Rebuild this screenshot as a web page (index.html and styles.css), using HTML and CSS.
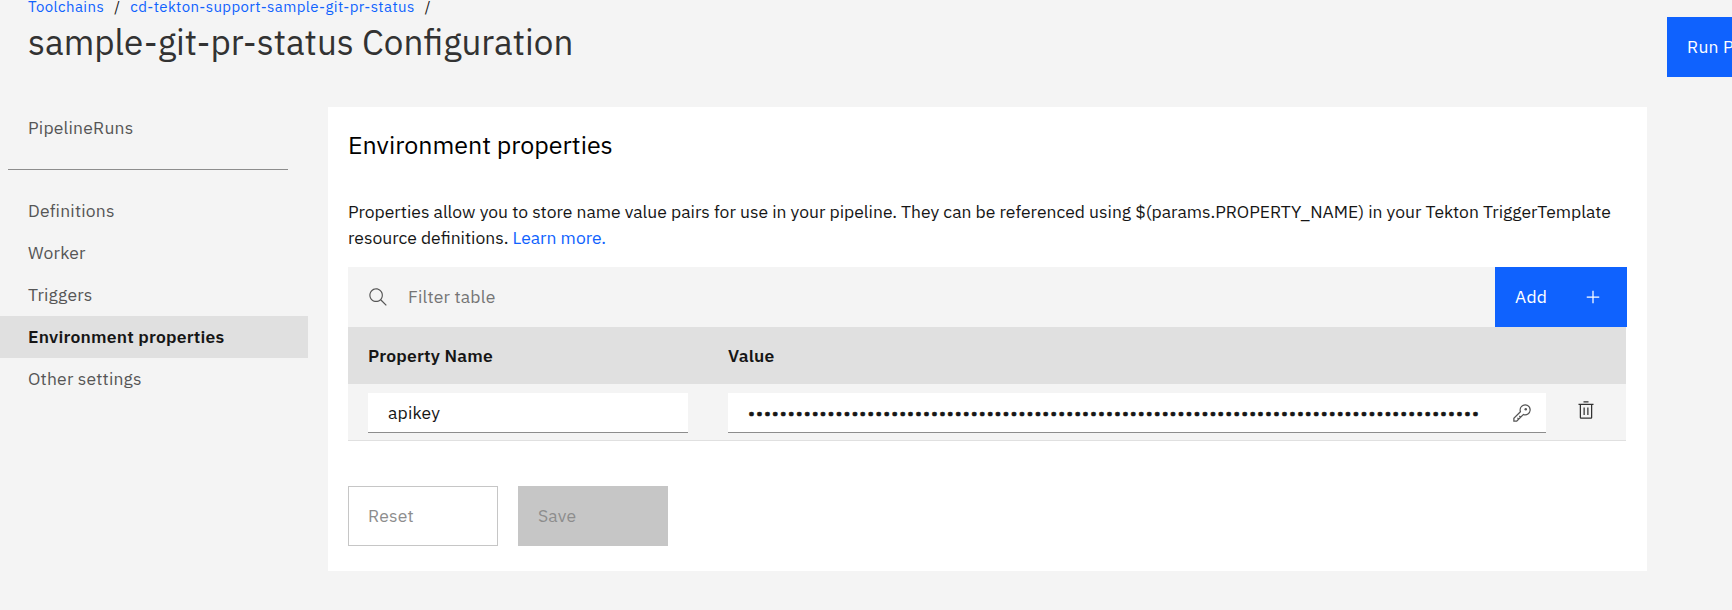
FILE: index.html
```html
<!DOCTYPE html>
<html lang="en">
<head>
<meta charset="utf-8">
<title>sample-git-pr-status Configuration</title>
<link rel="stylesheet" href="styles.css">
</head>
<body>
<header class="header">
  <div class="heading">
    <nav class="crumbs"><a class="crumb-root" href="#">Toolchains</a><span>/</span><a class="crumb-chain" href="#">cd-tekton-support-sample-git-pr-status</a><span>/</span></nav>
    <h1 class="title">sample-git-pr-status Configuration</h1>
  </div>
  <button class="btn run">Run Pipeline</button>
</header>
<div class="body">
  <nav class="side">
    <a class="item runs" href="#">PipelineRuns</a>
    <hr class="rule">
    <a class="item defs" href="#">Definitions</a>
    <a class="item worker" href="#">Worker</a>
    <a class="item triggers" href="#">Triggers</a>
    <a class="item selected" href="#">Environment properties</a>
    <a class="item other" href="#">Other settings</a>
  </nav>
  <main class="panel">
    <h2 class="subtitle">Environment properties</h2>
    <p class="intro"><span class="intro-a">Properties allow you to store name value pairs for use in your pipeline. They can be referenced using $(params.PROPERTY_NAME) in your Tekton TriggerTemplate</span><br><span class="intro-b">resource definitions. <a href="#">Learn more.</a></span></p>
    <div class="toolbar">
      <svg class="search" width="20" height="20" viewBox="0 0 16 16"><path d="M15 14.3L10.7 10c1.9-2.3 1.6-5.8-.7-7.700S4.200.7 2.300 3 .7 8.800 3 10.700c2 1.700 5 1.700 7 0l4.300 4.300.7-.7zM2 6.500C2 4 4 2 6.500 2S11 4 11 6.500 9 11 6.500 11 2 9 2 6.500z"/></svg>
      <span class="filter">Filter table</span>
      <button class="btn add"><span>Add</span><svg width="20" height="20" viewBox="0 0 32 32"><path d="M17 15V6h-2v9H6v2h9v9h2v-9h9v-2z"/></svg></button>
    </div>
    <div class="table">
      <div class="row head"><span class="th-name">Property Name</span><span class="th-value">Value</span></div>
      <div class="row entry">
        <div class="field"><span class="key-text">apikey</span></div>
        <div class="field secret"><span class="dots">•••••••••••••••••••••••••••••••••••••••••••••••••••••••••••••••••••••••••••••••••••••••••••••••••••••••••</span>
          <svg class="key" width="20" height="20" viewBox="0 0 32 32"><path d="M21 2a9 9 0 0 0-9 9 8.870 8.870 0 0 0 .390 2.610L2 24v6h6l10.390-10.390A9 9 0 0 0 30 11.740 8.770 8.770 0 0 0 21 2zm0 16a7 7 0 0 1-2-.3l-1.150-.350-.850.850-3.180 3.180L12.410 20 11 21.410l1.380 1.380-1.590 1.590L9.410 23 8 24.410l1.380 1.380L7.170 28H4v-3.170L13.800 15l.850-.85-.290-.950a7.140 7.140 0 0 1 3.400-8.440 7 7 0 0 1 10.240 6 6.690 6.690 0 0 1-1.090 4A7 7 0 0 1 21 18z"/><circle cx="22" cy="10" r="2"/></svg>
        </div>
        <svg class="trash" width="20" height="20" viewBox="0 0 32 32"><path d="M12 12h2v12h-2zM18 12h2v12h-2zM4 6v2h2v20a2 2 0 0 0 2 2h16a2 2 0 0 0 2-2V8h2V6zm4 22V8h16v20zM12 2h8v2h-8z"/></svg>
      </div>
    </div>
    <div class="actions"><button class="btn reset">Reset</button><button class="btn save">Save</button></div>
  </main>
</div>
</body>
</html>
```
FILE: styles.css
```css
* { box-sizing: border-box; }
body { margin: 0; height: 610px; overflow: hidden; background: #f4f4f4; color: #161616; font: 17.5px/26px "IBM Plex Sans", Roboto, "Noto Sans", sans-serif; letter-spacing: 0.2px; white-space: nowrap; }
a { color: #0f62fe; text-decoration: none; }
h1, h2, p { margin: 0; font-weight: 400; letter-spacing: 0; }
.header { display: flex; justify-content: space-between; height: 107px; padding-left: 28px; overflow: hidden; }
.crumbs { display: flex; gap: 10px; height: 15px; font-size: 15px; line-height: 13px; letter-spacing: 0.4px; }
.title { font-size: 35px; line-height: 54px; color: #323232; }
.btn { display: flex; align-items: center; flex: none; height: 60px; margin: 0; padding: 0 20px 1px; border: 0; border-radius: 0; background: #0f62fe; color: #fff; font: inherit; letter-spacing: 0.2px; text-align: left; }
.run { width: 178px; margin: 17px -113px 0 0; }
.body { display: flex; gap: 20px; }
.side { width: 308px; }
.item { display: block; height: 42px; padding-left: 28px; line-height: 41px; color: #565656; }
.rule { width: 280px; height: 1px; margin: 20px 0 20px 8px; border: 0; background: #8d8d8d; }
.selected { background: #e0e0e0; color: #161616; font-weight: 600; }
.panel { width: 1319px; height: 464px; padding: 21px 20px 0; background: #fff; }
.subtitle { font-size: 25px; line-height: 34px; color: #000; }
.intro { margin-top: 37px; height: 68px; color: #161616; }
.toolbar { display: flex; align-items: center; height: 60px; padding-left: 20px; background: #f4f4f4; }
.search { fill: #565656; }
.filter { margin-left: 20px; color: #757575; }
.add { justify-content: space-between; width: 132px; margin-left: auto; padding-right: 24px; }
.add svg { fill: #fff; }
.table { width: 1278px; background: #f4f4f4; }
.row { display: grid; grid-template-columns: 320px 818px 20px; gap: 0 40px; padding-left: 20px; }
.head { height: 57px; align-items: center; background: #e0e0e0; font-weight: 600; }
.entry { height: 57px; padding-top: 9px; border-bottom: 1px solid #e0e0e0; }
.entry .trash { margin: 7px 0 0 -10px; fill: #323232; }
.field { display: flex; align-items: center; height: 40px; padding: 0 14px 0 20px; background: #fff; border-bottom: 1px solid #8d8d8d; }
.secret { justify-content: space-between; }
.dots { width: 731px; overflow: hidden; letter-spacing: 1.025px; -webkit-text-stroke: 0.5px #161616; }
.key { fill: #565656; }
.actions { display: flex; gap: 20px; margin-top: 45px; }
.actions .btn { width: 150px; color: #8d8d8d; }
.actions .reset { padding-left: 19px; border: 1px solid #c6c6c6; background: #fff; }
.actions .save { background: #c6c6c6; }
```
